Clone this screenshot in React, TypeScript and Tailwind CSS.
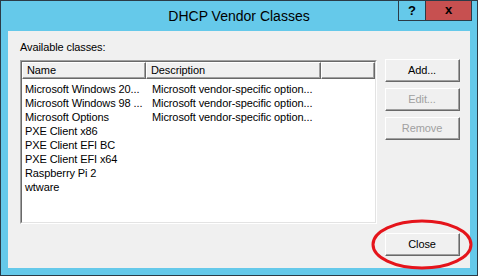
const rows = [
  { name: "Microsoft Windows 20...", desc: "Microsoft vendor-specific option..." },
  { name: "Microsoft Windows 98 ...", desc: "Microsoft vendor-specific option..." },
  { name: "Microsoft Options", desc: "Microsoft vendor-specific option..." },
  { name: "PXE Client x86", desc: "" },
  { name: "PXE Client EFI BC", desc: "" },
  { name: "PXE Client EFI x64", desc: "" },
  { name: "Raspberry Pi 2", desc: "" },
  { name: "wtware", desc: "" },
];

function Button({ label, disabled }: { label: string; disabled?: boolean }) {
  return (
    <div className="w-[75px] h-[23px] border border-t-white border-l-white border-r-[#696969] border-b-[#696969]">
      <div
        className={
          "h-full flex items-center justify-center bg-[#f0f0f0] border-r border-b border-[#a0a0a0] " +
          (disabled ? "text-[#a0a0a0]" : "text-black")
        }
      >
        {label}
      </div>
    </div>
  );
}

function HeaderCell({ label, w }: { label: string; w: string }) {
  return (
    <div className={w + " h-full border-t border-l border-t-white border-l-white border-r border-b border-r-[#696969] border-b-[#696969]"}>
      <div className="h-full pl-[4px] flex items-center bg-[#f0f0f0] border-r border-b border-[#a0a0a0]">
        {label}
      </div>
    </div>
  );
}

export default function App() {
  return (
    <div
      className="relative w-[478px] h-[276px] bg-[#65c9ea] border border-[#2b3b47] text-[11px] tracking-[-0.1px] text-black"
      style={{ fontFamily: '"Liberation Sans", Arial, sans-serif' }}
    >
      {/* title bar */}
      <div className="relative h-[30px] flex items-center justify-center">
        <span className="text-[14px] tracking-normal mt-[1px]">DHCP Vendor Classes</span>
        <div className="absolute top-0 right-[5px] flex h-[20px] border-x border-b border-[#2b3b47]">
          <div className="w-[27px] flex items-center justify-center border-r border-[#2b3b47] font-bold text-[13px]">?</div>
          <div className="w-[45px] flex items-center justify-center bg-[#c75050] font-bold text-[13px] leading-none pb-[2px]">x</div>
        </div>
      </div>

      {/* client */}
      <div className="ml-[7px] w-[462px] h-[237px] bg-[#f0f0f0] pl-[12px] pr-[10px] flex flex-col">
        <div className="mt-[10px] h-[13px] leading-[13px]">Available classes:</div>
        <div className="mt-[6px] flex gap-[8px]">
          <div className="w-[357px] h-[164px] border border-t-[#a0a0a0] border-l-[#a0a0a0] border-r-white border-b-white">
            <div className="h-full bg-white border border-t-[#696969] border-l-[#696969] border-r-[#e3e3e3] border-b-[#e3e3e3]">
              <div className="flex h-[17px] leading-[13px]">
                <HeaderCell label="Name" w="w-[124px]" />
                <HeaderCell label="Description" w="w-[175px]" />
                <HeaderCell label="" w="flex-1" />
              </div>
              <div className="pt-[3px]">
                {rows.map((r) => (
                  <div key={r.name} className="flex h-[14px] leading-[14px] whitespace-nowrap">
                    <div className="w-[124px] pl-[3px]">{r.name}</div>
                    <div className="pl-[6px]">{r.desc}</div>
                  </div>
                ))}
              </div>
            </div>
          </div>
          <div className="mt-[-1px] flex flex-col gap-[6px]">
            <Button label="Add..." />
            <Button label="Edit..." disabled />
            <Button label="Remove" disabled />
          </div>
        </div>
        <div className="mt-[9px] self-end">
          <Button label="Close" />
        </div>
      </div>

      {/* red annotation around Close */}
      <svg className="absolute left-[370px] top-[218px]" width="102" height="51" viewBox="0 0 102 51">
        <ellipse cx="51" cy="25.5" rx="49" ry="23.5" fill="none" stroke="#e5141b" strokeWidth="3" />
      </svg>
    </div>
  );
}
